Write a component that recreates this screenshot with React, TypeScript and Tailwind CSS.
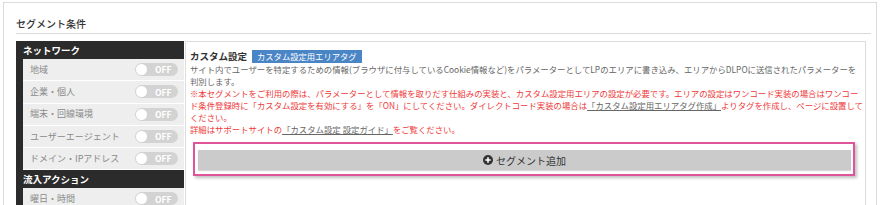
const networkItems = ["地域", "企業・個人", "端末・回線環境", "ユーザーエージェント", "ドメイン・IPアドレス"];
const actionItems = ["曜日・時間"];

function Toggle() {
  return (
    <div className="flex h-[13px] w-[43px] items-center rounded-full bg-[#d3d3d3] pl-[1px]">
      <span className="h-[11px] w-[11px] rounded-full bg-white" />
      <span className="ml-[8px] text-[8.5px] font-bold leading-none text-white">OFF</span>
    </div>
  );
}

function SideGroup({ title, items }: { title: string; items: string[] }) {
  return (
    <div>
      <div className="flex h-[18px] items-center pl-[7px] text-[9.5px] font-bold text-white">{title}</div>
      <div className="ml-[7px] bg-[#eeeeee]">
        {items.map((item, i) => (
          <div
            key={i}
            className="flex h-[22.25px] items-center justify-between border-b border-white pl-[7px] pr-[6px] text-[9px] text-[#8a8a8a]"
          >
            <span>{item}</span>
            <Toggle />
          </div>
        ))}
      </div>
    </div>
  );
}

export default function App() {
  return (
    <div className="h-[205px] w-[881px] overflow-hidden bg-white pl-[3px] pr-[4px] pt-[2px] font-['Noto_Sans_CJK_JP','Noto_Sans',sans-serif]">
      <div className="h-[240px] border border-[#dcdcdc] pl-[12px] pr-[5px]">
        <div className="flex h-[31px] items-end border-b border-[#d9d9d9] pb-[2px] text-[10px] font-medium text-[#333]">
          セグメント条件
        </div>

        <div className="mt-[7px] flex pr-[5px]">
          <div className="w-[168px] shrink-0 bg-[#2b2b2b]">
            <SideGroup title="ネットワーク" items={networkItems} />
            <SideGroup title="流入アクション" items={actionItems} />
          </div>

          <div className="ml-[1px] min-w-0 flex-1 border border-[#dcdcdc] pl-[4px] pt-[7px]">
            <div className="flex items-center gap-[5px]">
              <span className="text-[9.5px] font-bold text-[#333]">カスタム設定</span>
              <span className="flex h-[13px] items-center bg-[#4a85c6] px-[5px] text-[8.3px] text-white">
                カスタム設定用エリアタグ
              </span>
            </div>

            <div className="whitespace-nowrap text-[8.4px] leading-[12px]">
              <p className="text-[#666]">
                サイト内でユーザーを特定するための情報(ブラウザに付与しているCookie情報など)をパラメーターとしてLPのエリアに書き込み、エリアからDLPOに送信されたパラメーターを
                <br />
                判別します。
              </p>
              <p className="text-[#ee3a3a]">
                ※本セグメントをご利用の際は、パラメーターとして情報を取りだす仕組みの実装と、カスタム設定用エリアの設定が必要です。エリアの設定はワンコード実装の場合はワンコー
                <br />
                ド条件登録時に「カスタム設定を有効にする」を「ON」にしてください。ダイレクトコード実装の場合は
                <span className="text-[#666] underline">「カスタム設定用エリアタグ作成」</span>
                よりタグを作成し、ページに設置して
                <br />
                ください。
                <br />
                詳細はサポートサイトの<span className="text-[#666] underline">「カスタム設定 設定ガイド」</span>をご覧ください。
              </p>
            </div>

            <div className="ml-[3px] mr-[10px] mt-[7px] border-2 border-[#e0559a] pb-[4px] pl-[3px] pr-[2px] pt-[6px] shadow-[2px_2px_3px_rgba(0,0,0,0.25)]">
              <div className="flex h-[20px] items-center justify-center gap-[3px] bg-[#cbcbcb] text-[10px] text-[#333] shadow-[0_1px_1px_rgba(0,0,0,0.15)]">
                <svg width="10" height="10" viewBox="0 0 10 10">
                  <circle cx="5" cy="5" r="5" fill="#333" />
                  <path d="M5 2.3v5.4M2.3 5h5.4" stroke="#fff" strokeWidth="1.6" />
                </svg>
                <span>セグメント追加</span>
              </div>
            </div>
          </div>
        </div>
      </div>
    </div>
  );
}
